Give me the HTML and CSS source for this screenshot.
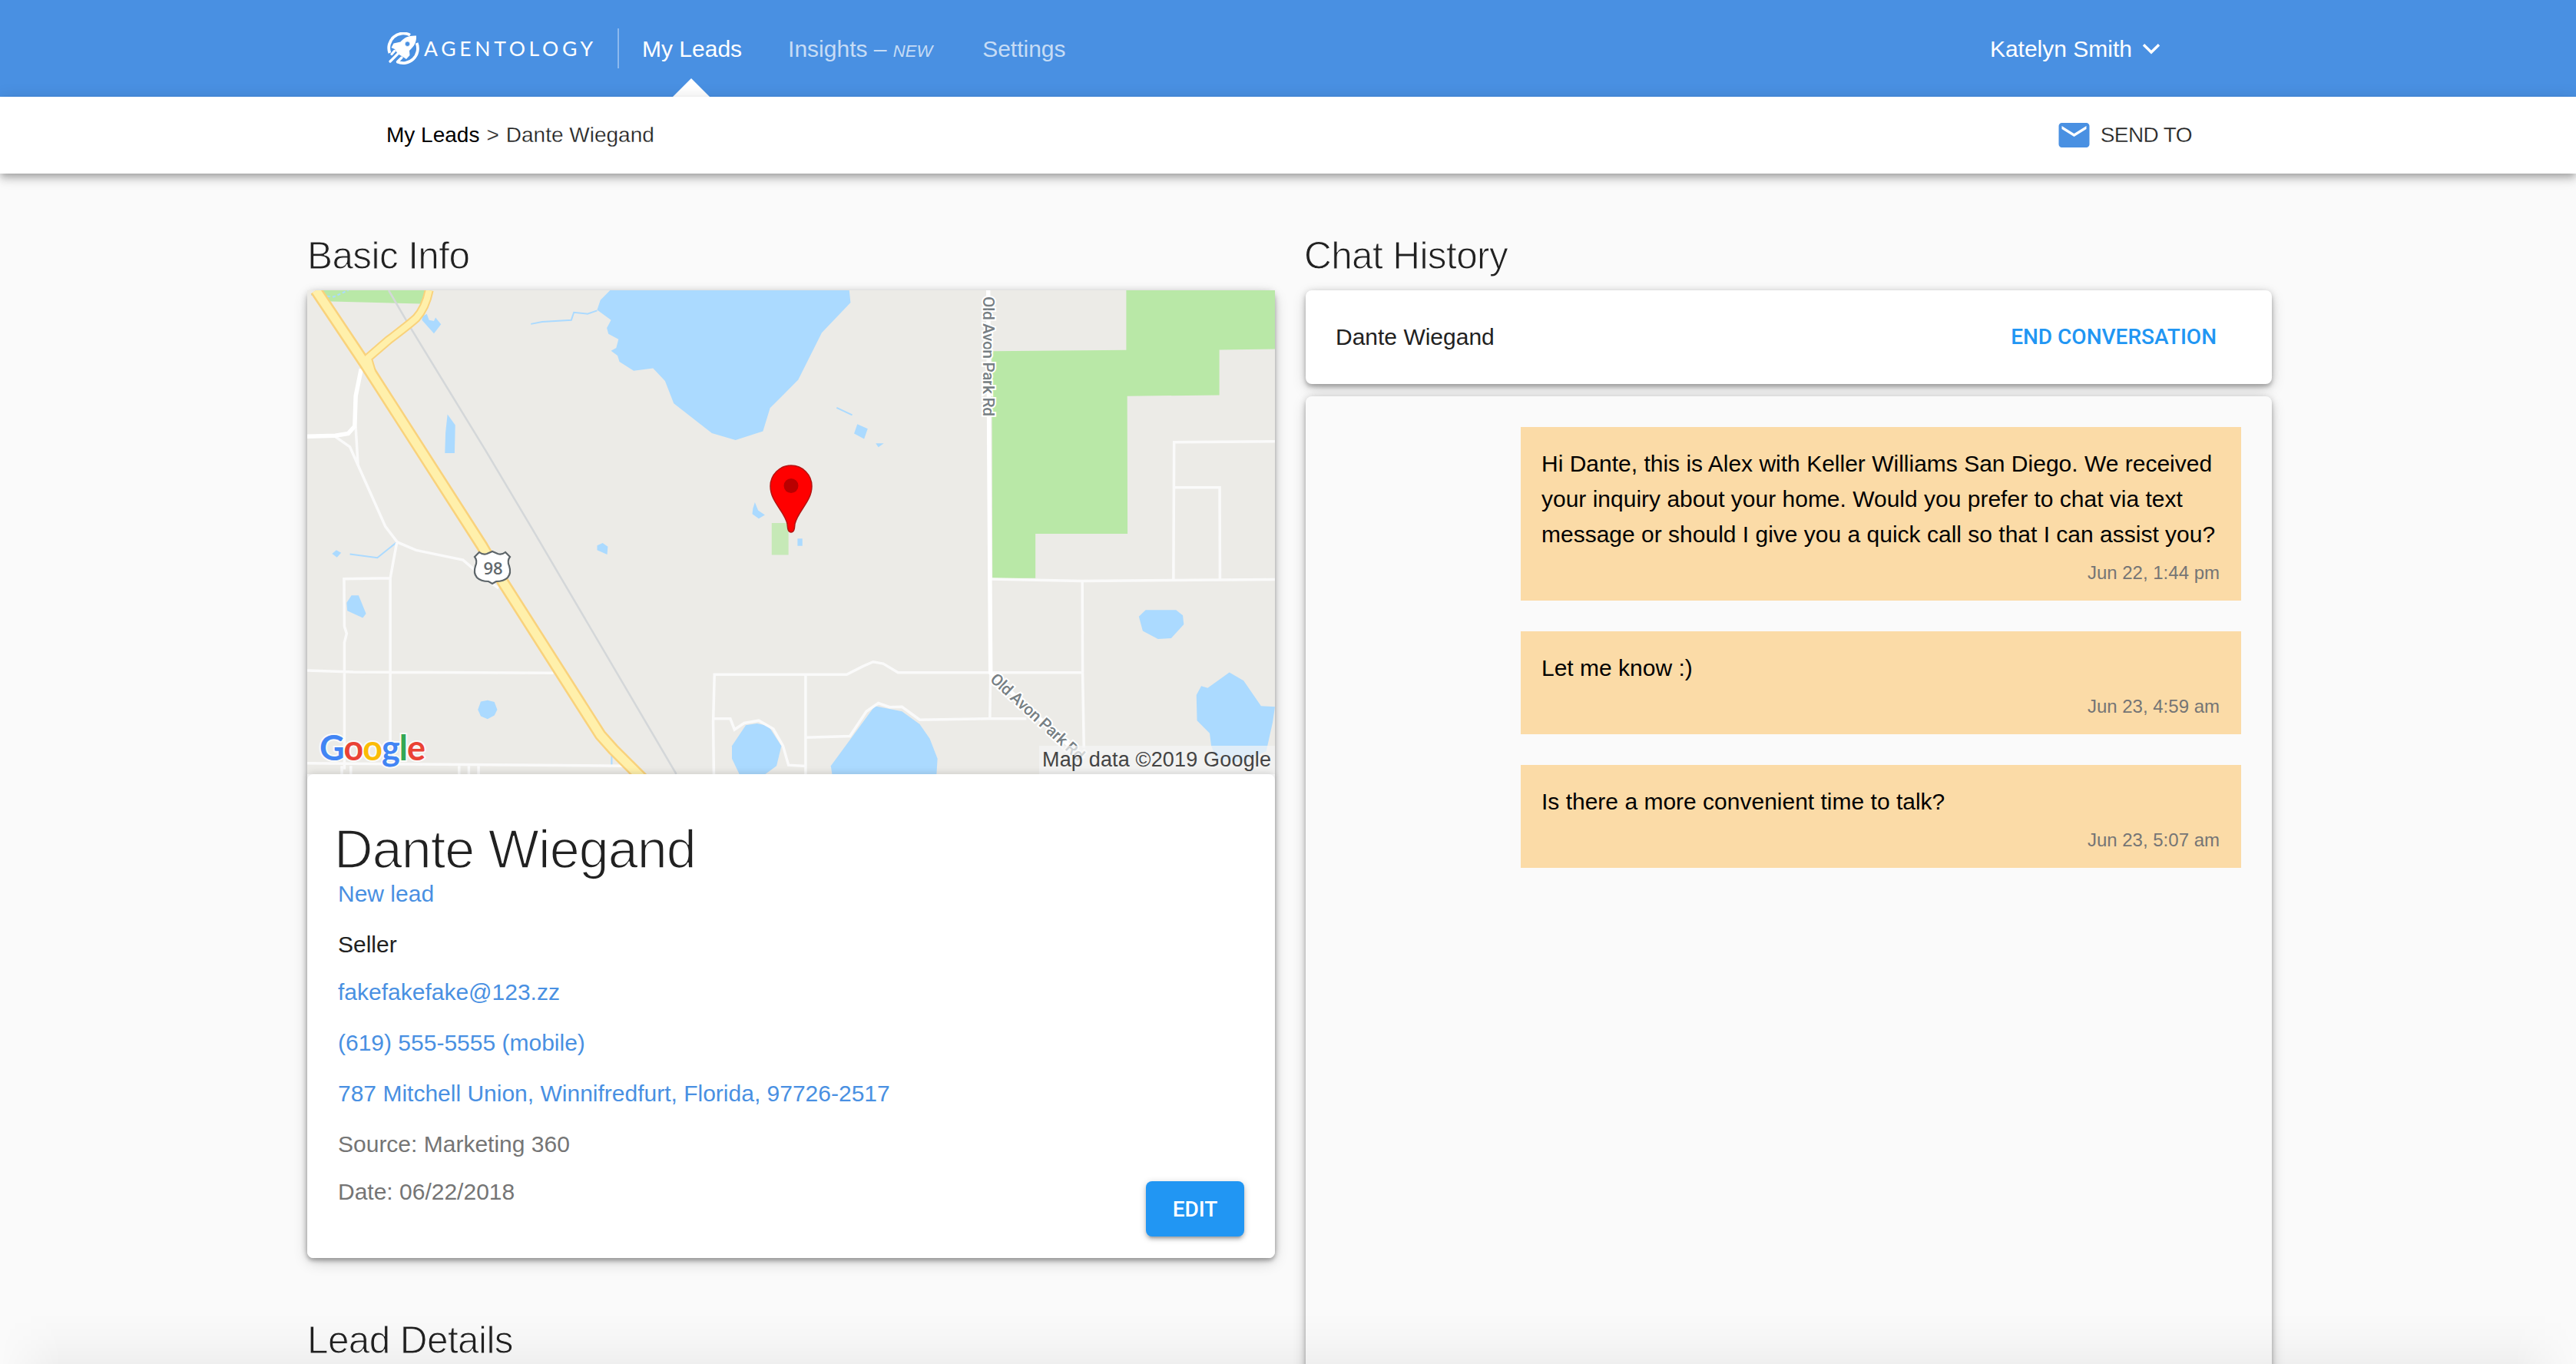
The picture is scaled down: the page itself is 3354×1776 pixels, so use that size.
FILE: index.html
```html
<!DOCTYPE html>
<html lang="en">
<head>
<meta charset="utf-8">
<title>Agentology</title>
<link rel="stylesheet" href="styles.css">
</head>
<body>
<header class="topbar">
  <a class="brand">
    <svg class="brand-mark" viewBox="0 0 42 42">
      <path d="M30 3.600A19 19 0 0 0 3.400 27" fill="none" stroke="#fff" stroke-width="3.800"/>
      <path d="M38.600 14A19 19 0 0 1 13 38.300" fill="none" stroke="#fff" stroke-width="3.800"/>
      <path d="M38 4.500C28 4 22 7 17.500 12.500L8.500 14.500L5.500 20L10 22C12 26 15 29.500 19 31L25 35L29.500 30L29 24C35.500 18 38.500 13 38 4.500Z" fill="#fff"/>
      <circle cx="26.500" cy="15.200" r="3.100" fill="#4990e2" stroke="#fff" stroke-width=".5"/>
      <path d="M9.500 24.500L6 28.500M14 28L4 38M19 33L13.500 38.500" stroke="#fff" stroke-width="3.200" stroke-linecap="round"/>
    </svg>
    <span class="brand-name">AGENTOLOGY</span>
  </a>
  <nav class="nav">
    <a class="nav-item active">My Leads</a>
    <a class="nav-item">Insights – <em>NEW</em></a>
    <a class="nav-item">Settings</a>
  </nav>
  <a class="user">Katelyn Smith
    <svg class="chevron" viewBox="0 0 24 15"><path d="M2 2.200L12 12L22 2.200" fill="none" stroke="#fff" stroke-width="3.400"/></svg>
  </a>
</header>
<div class="subbar">
  <div class="crumbs"><a>My Leads</a><span>&gt;</span><span>Dante Wiegand</span></div>
  <a class="send">
    <svg class="mail" viewBox="2 4 20 16"><path fill="#4990e2" d="M20 4H4c-1.100 0-1.990.9-1.990 2L2 18c0 1.100.9 2 2 2h16c1.100 0 2-.9 2-2V6c0-1.100-.9-2-2-2zm0 4l-8 5-8-5V6l8 5 8-5v2z"/></svg>
    <span>SEND TO</span>
  </a>
</div>
<main class="page">
  <section class="col">
    <h2>Basic Info</h2>
    <div class="lead-card">
      <div class="map">
        <svg class="map-base" viewBox="48 208 2994 1335" preserveAspectRatio="none">
          <g fill="#b9e8a7">
            <path d="M85 208H430L400 245L100 238Z"/>
            <path d="M2166 376L2582 373V208H3042V370L2870 372V497L2585 500L2586 880H2301V1002H2168Z"/>
            <path fill="#c6e9b7" d="M1485 850H1537V938H1485Z"/>
          </g>
          <g fill="#abdaff">
            <path d="M985 208L955 235L945 262L988 290L975 312L980 328L1011 343L1004 367L988 375L1008 388L1014 405L1058 430L1118 423L1155 458L1182 520L1300 602L1373 621L1458 597L1480 533L1567 455L1640 325L1729 242L1725 208Z"/>
            <path d="M403 290L440 327L462 302L445 283L440 293L425 290L418 273L404 280Z"/>
            <path d="M482 550L506 580L504 657H474L476 600Z"/>
            <path d="M1433 793L1443 815L1464 828L1445 838L1425 825L1427 810Z"/>
            <path d="M945 912L962 905L978 915L976 937L945 925Z"/>
            <path d="M125 935L138 925L153 932L140 945Z"/>
            <path d="M185 1050L207 1050L230 1100L220 1112L172 1092L170 1070Z"/>
            <path d="M576 1365L585 1343L606 1339L627 1344L636 1365L627 1381L606 1391L585 1383Z"/>
            <path d="M1405 1408L1440 1403L1475 1410L1515 1465L1500 1520L1465 1543H1385L1362 1500V1465Z"/>
            <path d="M1668 1520L1804 1355L1888 1370L1943 1405L1974 1445L1998 1500L1995 1543H1672Z"/>
            <path d="M2621 1108L2642 1090H2736L2757 1105L2760 1130L2721 1168L2680 1170L2633 1148Z"/>
            <path d="M2814 1300L2834 1305L2901 1262L2945 1285L2999 1355L3042 1357L3035 1400L3015 1480L2940 1510L2860 1500L2845 1465L2840 1430L2801 1395L2799 1325Z"/>
            <path d="M1750 577L1782 590L1771 618L1740 603Z"/>
            <path d="M1807 630H1832L1815 641ZM1565 893H1580V913H1565Z"/>
          </g>
          <g class="stream">
            <path d="M740 301L775 295L865 290L873 269L915 273L945 264"/>
            <path d="M180 936L265 946L325 903M1686 532L1734 552M990 1490V1520"/>
            <path stroke-dasharray="4 3" d="M60 220L130 226L175 208"/>
          </g>
          <path class="rail" d="M300 208L370 315L600 650L740 860L1190 1543"/>
          <g class="lane">
            <path d="M135 612L180 640L205 690L290 860L327 903L385 925L530 952L580 990L640 1030M198 585L205 690"/>
            <path d="M325 905L305 1002V1460M305 1002L162 1004L163 1135L170 1155L163 1180V1530M48 1257L190 1261L810 1264M48 1513L1030 1520"/>
            <path d="M155 1520V1543M183 1520V1543M518 1520V1543M548 1520V1543M578 1520V1543"/>
            <path d="M1306 1543L1304 1400L1308 1268H1717L1768 1245L1799 1233L1830 1238L1876 1263H2443"/>
            <path d="M1304 1390H1357L1370 1420L1400 1402L1445 1395L1490 1418L1520 1465L1537 1518L1590 1521M1590 1268V1543"/>
            <path d="M1590 1442L1727 1438L1778 1370L1815 1347L1850 1358L1888 1357L1943 1393L2160 1390H2273"/>
            <path d="M2446 1010L2447 1263L2451 1470M2165 1005L2443 1010L3042 1006M2728 1005L2730 627L3042 625M2728 752H2871L2872 1005M2162 1263L2160 1390"/>
          </g>
          <g class="street">
            <path d="M48 611L135 609L175 603L195 583L198 500L215 425"/>
            <path d="M2155 208L2158 700L2162 1263L2265 1350L2451 1500"/>
          </g>
          <path class="hwy-edge" d="M75 208L228 412L590 915L655 1015L955 1435L995 1475L1085 1555"/>
          <path class="ramp-edge" d="M425 208Q415 255 385 285Q360 305 300 345L235 395L250 440"/>
          <path class="hwy" d="M75 208L228 412L590 915L655 1015L955 1435L995 1475L1085 1555"/>
          <path class="ramp" d="M425 208Q415 255 385 285Q360 305 300 345L235 395L250 440"/>
        </svg>
        <svg class="map-labels" viewBox="0 0 1260 630">
          <path d="M224 341Q229 345 234 343L241 340L248 343Q253 345 258 341L264 347Q260 352 263 359Q266 368 261 374Q256 379 246 379L241 382L236 379Q226 379 221 374Q216 368 219 359Q222 352 218 347Z" fill="#fff" stroke="#5d6569" stroke-width="2.200"/>
          <text class="shield" x="242" y="370" text-anchor="middle">98</text>
          <text class="road" transform="translate(880 8) rotate(90)" textLength="156">Old Avon Park Rd</text>
          <text class="road" transform="translate(888 508) rotate(42.400)" textLength="157">Old Avon Park Rd</text>
          <path d="M630 315C625.500 315 625.500 309 625 304C621 287 603 275 603 255A27 27 0 0 1 657 255C657 275 639 287 635 304C634.500 309 634.500 315 630 315Z" fill="#f00" stroke="#b31412" stroke-width="1.500"/>
          <circle cx="630" cy="254.500" r="9.500" fill="#b90000"/>
          <text class="google" x="16" y="612" textLength="138"><tspan fill="#4285f4">G</tspan><tspan fill="#ea4335">o</tspan><tspan fill="#fbbc05">o</tspan><tspan fill="#4285f4">g</tspan><tspan fill="#34a853">l</tspan><tspan fill="#ea4335">e</tspan></text>
          <path d="M953 593H1260V630H953Z" fill="#f5f5f5" fill-opacity=".7"/>
          <text class="credit" x="957" y="620" textLength="298">Map data ©2019 Google</text>
        </svg>
      </div>
      <div class="lead-body">
        <div class="lead-info">
          <h1>Dante Wiegand</h1>
          <p class="link">New lead</p>
          <p class="wide">Seller</p>
          <p class="link snug">fakefakefake@123.zz</p>
          <p class="link wide">(619) 555-5555 (mobile)</p>
          <p class="link wide">787 Mitchell Union, Winnifredfurt, Florida, 97726-2517</p>
          <p class="muted wide">Source: Marketing 360</p>
          <p class="muted snug">Date: 06/22/2018</p>
        </div>
        <button class="edit">EDIT</button>
      </div>
    </div>
    <h2 class="next">Lead Details</h2>
  </section>
  <section class="col chat">
    <h2>Chat History</h2>
    <div class="chat-head"><span>Dante Wiegand</span><a class="end">END CONVERSATION</a></div>
    <div class="thread">
      <article class="msg"><p>Hi Dante, this is Alex with Keller Williams San Diego. We received<br>your inquiry about your home. Would you prefer to chat via text<br>message or should I give you a quick call so that I can assist you?</p><time>Jun 22, 1:44 pm</time></article>
      <article class="msg"><p>Let me know :)</p><time>Jun 23, 4:59 am</time></article>
      <article class="msg"><p>Is there a more convenient time to talk?</p><time>Jun 23, 5:07 am</time></article>
    </div>
  </section>
</main>
<div class="window-shade"></div>
</body>
</html>
```
FILE: styles.css
```css
* { box-sizing: border-box; }

html, body { height: 100%; }

body {
  margin: 0;
  overflow: hidden;
  background: #fafafa;
  color: #212121;
  font-family: "Liberation Sans", Arial, sans-serif;
  font-size: 30px;
  display: flex;
  flex-direction: column;
}

h1, h2, p { margin: 0; font-weight: 400; }

/* top bar */
.topbar {
  flex: none;
  height: 126px;
  padding: 0 541px 0 504px;
  background: #4990e2;
  color: #fff;
  display: flex;
  align-items: center;
}
.brand {
  display: flex;
  align-items: center;
  width: 302px;
  height: 52px;
  border-right: 2px solid #8cb9ee;
}
.brand-mark { width: 42px; height: 42px; margin-right: 6px; }
.brand-name { font: 400 26.500px/52px Lato, sans-serif; letter-spacing: 4.700px; }
.nav { display: flex; height: 126px; margin-left: 30px; gap: 60px; }
.nav-item { position: relative; line-height: 127px; color: rgba(255, 255, 255, .7); white-space: nowrap; }
.nav-item em { font-size: 22px; margin-right: 5px; }
.nav-item.active { color: #fff; }
.nav-item.active::after {
  content: "";
  position: absolute;
  left: 50%;
  bottom: 0;
  margin-left: -25px;
  border: 24px solid transparent;
  border-top: 0;
  border-bottom-color: #fff;
}
.user { margin-left: auto; display: flex; align-items: center; gap: 13px; line-height: 127px; }
.chevron { width: 24px; height: 15px; }

/* breadcrumb bar */
.subbar {
  flex: none;
  position: relative;
  z-index: 1;
  height: 100px;
  padding: 0 500px 0 503px;
  background: #fff;
  font-size: 28px;
  display: flex;
  align-items: center;
  justify-content: space-between;
  box-shadow: 0 4px 8px -2px rgba(0,0,0,.2), 0 8px 10px rgba(0,0,0,.14), 0 2px 20px rgba(0,0,0,.12);
  -webkit-text-stroke: .3px #fff;
}
.crumbs { display: flex; gap: 9px; line-height: 102px; }
.crumbs a { color: #000; -webkit-text-stroke: 0; }
.send { display: flex; align-items: center; gap: 14px; line-height: 102px; letter-spacing: -.6px; }
.mail { width: 41px; height: 32px; }

/* page */
.page {
  flex: 1;
  min-height: 0;
  display: grid;
  grid-template-columns: 1260px 1258px;
  gap: 40px;
  padding: 77px 0 0 400px;
}
.col { display: flex; flex-direction: column; min-height: 0; }
h2 {
  flex: none;
  font-size: 49.500px;
  line-height: 60px;
  letter-spacing: -.6px;
  margin: 0 0 15px;
  -webkit-text-stroke: 1px #fafafa;
}
.chat h2 { margin-left: -2px; }
h2.next { margin-top: 77px; }

.lead-card, .chat-head, .thread {
  flex: none;
  border-radius: 8px;
  box-shadow: 0 2px 10px rgba(0,0,0,.2), 0 4px 4px rgba(0,0,0,.14), 0 6px 20px -2px rgba(0,0,0,.2);
}
.lead-card { background: #fff; }
.map { height: 630px; position: relative; background: #ecebe7; }
.map-base, .map-labels { position: absolute; inset: 0; width: 100%; height: 100%; }
.map-base path { vector-effect: non-scaling-stroke; }
.stream { fill: none; stroke: #abdaff; stroke-width: 2; }
.rail { fill: none; stroke: #d4d7d9; stroke-width: 2.500; }
.lane { fill: none; stroke: #fafafa; stroke-width: 3.500; }
.street { fill: none; stroke: #fff; stroke-width: 5.500; }
.hwy-edge, .hwy, .ramp-edge, .ramp { fill: none; stroke-linejoin: round; }
.hwy-edge { stroke: #f9d27c; stroke-width: 16; }
.hwy { stroke: #fff0ab; stroke-width: 11; }
.ramp-edge { stroke: #f9d27c; stroke-width: 12; }
.ramp { stroke: #fff0ab; stroke-width: 8; }
.shield { font: 600 22px "Open Sans", sans-serif; fill: #62696d; }
.road { font: 500 21px Roboto, sans-serif; fill: #777f84; stroke: #fff; stroke-width: 4px; paint-order: stroke; }
.google { font: 700 45px Lato, sans-serif; stroke: #fff; stroke-width: 4px; stroke-opacity: .8; paint-order: stroke; }
.credit { font-size: 27px; fill: #444; }

.lead-body {
  position: relative;
  height: 630px;
  padding: 58px 40px 28px;
  background: #fff;
  border-radius: 8px;
  box-shadow: 0 -2px 8px rgba(0,0,0,.12);
  display: flex;
  justify-content: space-between;
}
h1 { margin-left: -5px; font-size: 70px; line-height: 80px; letter-spacing: -.900px; -webkit-text-stroke: 1.600px #fff; }
.lead-info p { line-height: 36px; }
.lead-info .wide { margin-top: 30px; }
.lead-info .snug { margin-top: 26px; }
.link { color: #4990e2; }
.muted { color: #757575; }
.edit {
  align-self: flex-end;
  width: 128px;
  height: 72px;
  border: 0;
  border-radius: 8px;
  background: #2196f3;
  color: #fff;
  font: 500 28px Roboto, sans-serif;
  box-shadow: 0 2px 10px rgba(0,0,0,.2), 0 4px 4px rgba(0,0,0,.14), 0 6px 2px -4px rgba(0,0,0,.12);
}

/* chat */
.chat-head {
  height: 122px;
  padding: 0 72px 0 39px;
  background: #fff;
  display: flex;
  align-items: center;
  justify-content: space-between;
}
.end { color: #2196f3; font: 500 28px/122px Roboto, sans-serif; }
.thread {
  flex: 1;
  margin: 16px 0 -40px;
  padding: 40px 40px 0;
  background: #fafafa;
  display: flex;
  flex-direction: column;
  align-items: flex-end;
  gap: 40px;
}
.msg { width: 938px; padding: 25px 28px 18px 27px; background: #fbdba7; color: #000; white-space: nowrap; }
.msg p { line-height: 46px; }
.msg time { display: block; margin-top: 9px; font-size: 24px; line-height: 36px; text-align: right; color: #757575; }

.window-shade {
  position: fixed;
  left: 0;
  right: 0;
  bottom: 0;
  z-index: 2;
  height: 66px;
  background: linear-gradient(rgba(0,0,0,0), rgba(0,0,0,.015) 50%, rgba(0,0,0,.045));
  -webkit-mask-image: linear-gradient(90deg, transparent, #000 80px, #000 calc(100% - 80px), transparent);
  mask-image: linear-gradient(90deg, transparent, #000 80px, #000 calc(100% - 80px), transparent);
}
```
